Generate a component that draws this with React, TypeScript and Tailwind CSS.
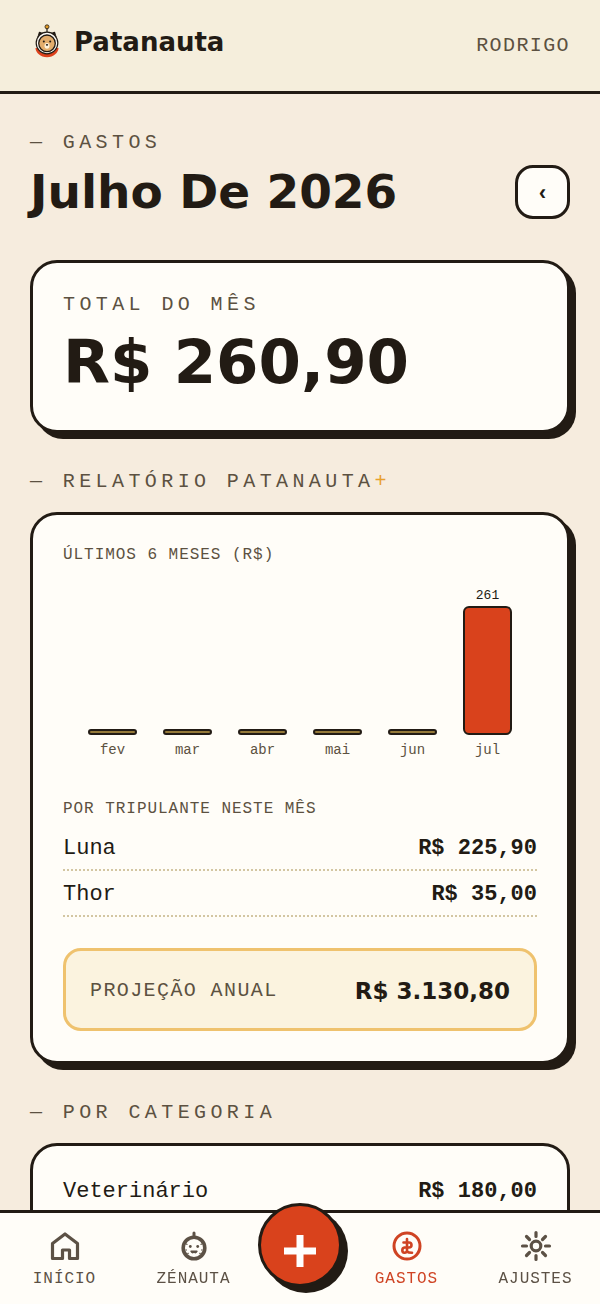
import { ReactNode } from "react";

const MONTHS = [
  { name: "fev", value: 0 },
  { name: "mar", value: 0 },
  { name: "abr", value: 0 },
  { name: "mai", value: 0 },
  { name: "jun", value: 0 },
  { name: "jul", value: 260.9 },
];

const CREW = [
  { name: "Luna", amount: "R$ 225,90" },
  { name: "Thor", amount: "R$ 35,00" },
];

const CATEGORIES = [{ name: "Veterinário", amount: "R$ 180,00" }];

const BAR_MAX = 129;
const BAR_MIN = 6;

const DISPLAY = "font-['DejaVu_Sans',sans-serif] font-bold";

function Logo() {
  return (
    <svg width="34" height="34" viewBox="0 0 34 34" aria-hidden="true">
      <path d="M5.500 24c0 4.500 5 9.300 11.500 9.300S28.500 28.500 28.500 24z" fill="#dc411c" />
      <path d="M8 13.500l1.500-5 4 1.500M26 13.500l-1.500-5-4 1.500" fill="#221b14" stroke="#221b14" strokeWidth="1.400" strokeLinejoin="round" />
      <circle cx="17" cy="19" r="10.800" fill="#fffdf8" stroke="#221b14" strokeWidth="1.200" />
      <circle cx="17" cy="19.300" r="8.300" fill="#e3ad6c" stroke="#221b14" strokeWidth="1.300" />
      <path d="M17 8V4" stroke="#221b14" strokeWidth="1.200" />
      <circle cx="17" cy="2.800" r="2" fill="#e09a26" stroke="#221b14" strokeWidth="0.800" />
      <circle cx="13.800" cy="17.500" r="1" fill="#221b14" />
      <circle cx="20.200" cy="17.500" r="1" fill="#221b14" />
      <ellipse cx="17" cy="21.800" rx="2.500" ry="2.900" fill="#fff3dc" />
      <ellipse cx="17" cy="20.800" rx="1.200" ry="0.900" fill="#221b14" />
    </svg>
  );
}

function HomeIcon() {
  return (
    <svg width="32" height="32" viewBox="0 0 32 32" fill="none" stroke="currentColor" strokeWidth="3.200" strokeLinejoin="round" aria-hidden="true">
      <path d="M3.500 13.500L16 4l12.500 9.500V28.500h-8v-8.500h-7v8.500h-10z" />
    </svg>
  );
}

function PetIcon() {
  return (
    <svg width="32" height="32" viewBox="0 0 32 32" fill="none" stroke="currentColor" aria-hidden="true">
      <circle cx="16" cy="18" r="10.800" strokeWidth="3.600" />
      <path d="M8 14l1.500.5M24 14l-1.500.5M7.500 20h1.500M24.500 20H23M9.500 24l1-1M22.500 24l-1-1" strokeWidth="1.200" />
      <path d="M16 6V3" strokeWidth="3" strokeLinecap="round" />
      <circle cx="12.300" cy="16.500" r="1.400" fill="currentColor" stroke="none" />
      <circle cx="19.700" cy="16.500" r="1.400" fill="currentColor" stroke="none" />
      <path d="M13 21.300c.8 2 2.500 1.500 3 .5c.5 1 2.200 1.500 3-.5z" fill="currentColor" strokeWidth="1.400" strokeLinejoin="round" />
    </svg>
  );
}

function MoneyIcon() {
  return (
    <svg width="32" height="32" viewBox="0 0 32 32" fill="none" stroke="currentColor" strokeWidth="3" strokeLinecap="round" strokeLinejoin="round" aria-hidden="true">
      <circle cx="16" cy="16" r="13" />
      <path d="M16 9v13M12.500 12.500h5.500a2.500 2.500 0 0 1 0 5h-4.500a2.700 2.700 0 0 0 0 5.300c1.200 0 2-.8 2.500-1.300c1 1 2.500 1.300 5 1.300" strokeWidth="2.600" />
    </svg>
  );
}

function SunIcon() {
  return (
    <svg width="32" height="32" viewBox="0 0 32 32" fill="none" stroke="currentColor" strokeWidth="3.200" strokeLinecap="round" aria-hidden="true">
      <circle cx="16" cy="16" r="4.800" />
      <path d="M16 2.500v4M16 25.500v4M2.500 16h4M25.500 16h4M6.500 6.500l3 3M22.500 22.500l3 3M6.500 25.500l3-3M22.500 9.500l3-3" />
    </svg>
  );
}

function SectionLabel({ children }: { children: ReactNode }) {
  return (
    <h2 className="mt-[35px] mb-4 text-[20px] leading-7 tracking-[0.22em] uppercase text-[#5c5141]">
      — {children}
    </h2>
  );
}

function SmallTitle({ children }: { children: ReactNode }) {
  return <h3 className="text-base leading-6 tracking-[0.06em] uppercase text-[#5c5141]">{children}</h3>;
}

function AmountRows({ rows }: { rows: { name: string; amount: string }[] }) {
  return (
    <dl className="text-[22px] leading-[29px] text-[#221b14]">
      {rows.map((r) => (
        <div key={r.name} className="flex justify-between border-b-2 border-dotted border-[#d3c6a2] pt-[9px] pb-[6px]">
          <dt>{r.name}</dt>
          <dd className="font-bold">{r.amount}</dd>
        </div>
      ))}
    </dl>
  );
}

function MonthlyChart() {
  const max = Math.max(...MONTHS.map((m) => m.value));
  return (
    <div className="mt-[19px] flex items-end px-3">
      {MONTHS.map((m) => (
        <div key={m.name} className="flex flex-1 flex-col items-center">
          {m.value > 0 && <span className="text-[13px] leading-5 text-[#221b14]">{Math.round(m.value)}</span>}
          <div
            className={`w-[49px] border-2 border-[#221b14] ${m.value > 0 ? "rounded-md bg-[#d9421c]" : "rounded-full bg-[#94793a]"}`}
            style={{ height: Math.max(BAR_MIN, (m.value / max) * BAR_MAX) }}
          />
          <span className="mt-[5px] text-sm leading-5 text-[#5c5141]">{m.name}</span>
        </div>
      ))}
    </div>
  );
}

function NavItem({ label, active, children }: { label: string; active?: boolean; children: ReactNode }) {
  return (
    <a
      href="#"
      aria-current={active ? "page" : undefined}
      className={`flex flex-1 flex-col items-center text-base leading-6 tracking-[0.06em] uppercase ${active ? "text-[#cf4323]" : "text-[#5c5145]"}`}
    >
      {children}
      <span className="mt-[5px]">{label}</span>
    </a>
  );
}

export default function App() {
  return (
    <div className="min-h-screen bg-[#f6ecde] font-['Liberation_Mono',monospace] text-[#221b14]">
      <header className="flex items-start justify-between border-b-3 border-[#221b14] bg-[#f5eedc] px-[30px] pt-6 pb-[31px]">
        <a href="#" className="flex items-start gap-[10px]">
          <Logo />
          <span className={`${DISPLAY} pt-0.5 text-[26px] leading-8`}>Patanauta</span>
        </a>
        <span className="mt-2 text-[20px] leading-7 tracking-[0.07em] uppercase text-[#5c5141]">Rodrigo</span>
      </header>

      <main className="px-[30px] pt-[35px] pb-14">
        <div className="flex items-end justify-between">
          <div>
            <p className="text-[20px] leading-7 tracking-[0.22em] uppercase text-[#5c5141]">— Gastos</p>
            <h1 className={`${DISPLAY} mt-[11px] pb-[3px] text-[47px] leading-[48px]`}>Julho De 2026</h1>
          </div>
          <button
            type="button"
            aria-label="Mês anterior"
            className="flex h-[54px] w-[55px] items-center justify-center rounded-[18px] border-3 border-[#221b14] bg-[#fffdf8] pt-1 text-[22px] font-bold"
          >
            ‹
          </button>
        </div>

        <section className="mt-[41px] rounded-[27px] border-3 border-[#221b14] bg-[#fffdf8] px-[30px] pt-7 pb-8 shadow-[6px_6px_0_#221b14]">
          <p className="text-[20px] leading-7 tracking-[0.22em] uppercase text-[#5c5141]">Total do mês</p>
          <p className={`${DISPLAY} mt-[7px] text-[61px] leading-[72px]`}>R$ 260,90</p>
        </section>

        <SectionLabel>
          Relatório Patanauta<span className="text-[#e8a02c]">+</span>
        </SectionLabel>
        <section className="rounded-[27px] border-3 border-[#221b14] bg-[#fffdf8] px-[30px] pt-7 pb-[30px] shadow-[6px_6px_0_#221b14]">
          <SmallTitle>Últimos 6 meses (R$)</SmallTitle>
          <MonthlyChart />
          <div className="mt-[37px] mb-1">
            <SmallTitle>Por tripulante neste mês</SmallTitle>
          </div>
          <AmountRows rows={CREW} />
          <div className="mt-[31px] flex items-center justify-between rounded-[18px] border-3 border-[#efc26e] bg-[#fbf3df] px-6 pt-[26px] pb-[23px]">
            <span className="text-[20px] leading-7 tracking-[0.07em] uppercase text-[#5c5141]">Projeção anual</span>
            <span className={`${DISPLAY} text-[23px] leading-7`}>R$ 3.130,80</span>
          </div>
        </section>

        <SectionLabel>Por categoria</SectionLabel>
        <section className="rounded-[27px] border-3 border-[#221b14] bg-[#fffdf8] px-[30px] py-[22px]">
          <AmountRows rows={CATEGORIES} />
        </section>
      </main>

      <nav className="fixed inset-x-0 bottom-0 flex items-start border-t-3 border-[#221b14] bg-[#fffdf8] pt-[17px] pb-[13px]">
        <NavItem label="Início"><HomeIcon /></NavItem>
        <NavItem label="Zénauta"><PetIcon /></NavItem>
        <button
          type="button"
          aria-label="Adicionar gasto"
          className="-mt-[27px] -mb-4 flex size-[84px] shrink-0 items-center justify-center rounded-full border-3 border-[#221b14] bg-[#d9421c] pt-3 text-white shadow-[6px_6px_0_#221b14]"
        >
          <svg width="34" height="34" viewBox="0 0 34 34" stroke="currentColor" strokeWidth="7" aria-hidden="true">
            <path d="M17 1v32M1 17h32" />
          </svg>
        </button>
        <NavItem label="Gastos" active><MoneyIcon /></NavItem>
        <NavItem label="Ajustes"><SunIcon /></NavItem>
      </nav>
    </div>
  );
}
